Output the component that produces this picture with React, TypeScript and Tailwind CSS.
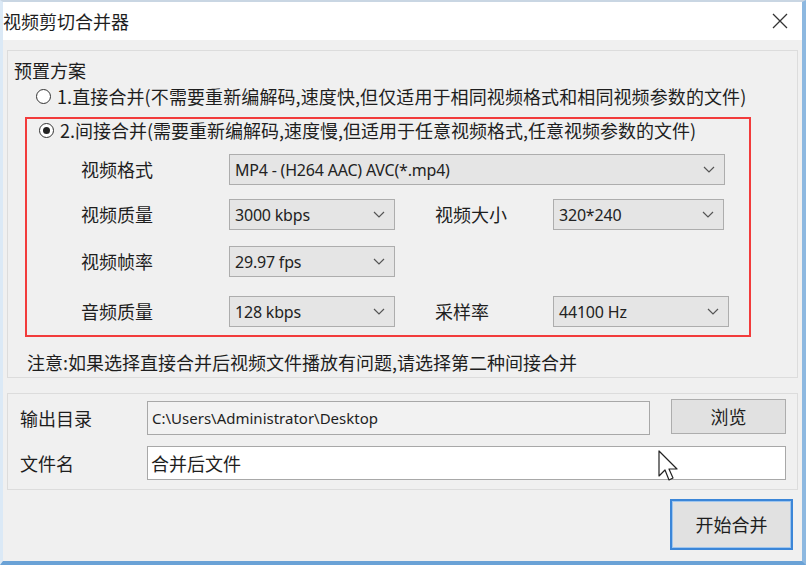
import React from 'react';

const CJK = '"Noto Sans CJK SC", "Noto Sans", sans-serif';

/**
 * Windows-style dropdown box
 */
const Select = ({ value, className }: { value: string; className: string }) => (
  <div
    className={`flex h-[31px] items-center justify-between border border-[#adadad] bg-[#e5e5e5] pl-[5px] pr-[9px] text-[16px] text-[#222] ${className}`}
    style={{ fontFamily: '"Noto Sans", "Noto Sans CJK SC", sans-serif' }}
  >
    <span className="tracking-[-0.2px]">{value}</span>
    <svg width="12" height="7" viewBox="0 0 12 7" fill="none">
      <path d="M1 1l5 5 5-5" stroke="#555" strokeWidth="1.2" />
    </svg>
  </div>
);

const Radio = ({ checked }: { checked?: boolean }) => (
  <span className="flex h-[15px] w-[15px] shrink-0 items-center justify-center rounded-full border border-[#333] bg-white">
    {checked && <span className="h-[7px] w-[7px] rounded-full bg-[#222]" />}
  </span>
);

export default function App() {
  return (
    <div
      className="relative flex h-[565px] w-[806px] flex-col overflow-hidden border-t-2 border-t-[#c9d6e3] border-b-[4px] border-b-[#6aa2d6] border-l-[3px] border-l-[#dbe9f6] border-r-[4px] border-r-[#8db8e0] bg-[#f0f0f0] text-[18px] text-[#1e1e1e]"
      style={{ fontFamily: CJK }}
    >
      {/* Title bar */}
      <div className="flex h-[38px] shrink-0 items-center justify-between bg-white pl-0 pr-[14px]">
        <span className="leading-none">视频剪切合并器</span>
        <svg width="16" height="16" viewBox="0 0 16 16" fill="none">
          <path d="M1 1l14 14M15 1L1 15" stroke="#333" strokeWidth="1.3" />
        </svg>
      </div>

      <div className="flex flex-1 flex-col px-[4px] pt-[10px]">
        {/* Group 1: presets */}
        <div className="flex h-[328px] flex-col border border-[#dcdcdc] pl-[6px] pr-[6px] pt-[8px]">
          <div className="leading-[22px]">预置方案</div>
          <div className="mt-[4px] flex items-center gap-[6px] pl-[22px] leading-[22px]">
            <Radio />
            <span className="tracking-[0.1px]">1.直接合并(不需要重新编解码,速度快,但仅适用于相同视频格式和相同视频参数的文件)</span>
          </div>

          <div className="mt-[10px] ml-[11px] mr-[40px] flex flex-col border-2 border-[#f23b3b] pb-[8px] pl-[12px]">
            <div className="flex items-center gap-[6px] leading-[22px]">
              <Radio checked />
              <span>2.间接合并(需要重新编解码,速度慢,但适用于任意视频格式,任意视频参数的文件)</span>
            </div>

            <div className="mt-[13px] flex items-center pl-[42px]">
              <span className="w-[148px]">视频格式</span>
              <Select value="MP4 - (H264 AAC) AVC(*.mp4)" className="w-[496px]" />
            </div>

            <div className="mt-[14px] flex items-center pl-[42px]">
              <span className="w-[148px]">视频质量</span>
              <Select value="3000 kbps" className="w-[166px]" />
              <span className="ml-[40px] w-[118px]">视频大小</span>
              <Select value="320*240" className="w-[171px]" />
            </div>

            <div className="mt-[16px] flex items-center pl-[42px]">
              <span className="w-[148px]">视频帧率</span>
              <Select value="29.97 fps" className="w-[166px]" />
            </div>

            <div className="mt-[19px] flex items-center pl-[42px]">
              <span className="w-[148px]">音频质量</span>
              <Select value="128 kbps" className="w-[166px]" />
              <span className="ml-[40px] w-[118px]">采样率</span>
              <Select value="44100 Hz" className="w-[176px]" />
            </div>
          </div>

          <div className="mt-[14px] pl-[13px] leading-[22px]">
            注意:如果选择直接合并后视频文件播放有问题,请选择第二种间接合并
          </div>
        </div>

        {/* Group 2: output */}
        <div className="mt-[15px] flex h-[97px] flex-col gap-[11px] border border-[#dcdcdc] pl-[12px] pr-[10px] pt-[7px]">
          <div className="flex items-center">
            <span className="w-[127px]">输出目录</span>
            <div
              className="flex h-[34px] w-[503px] items-center border border-[#a8a8a8] bg-[#f2f2f2] pl-[4px] text-[15px]"
              style={{ fontFamily: '"Noto Sans", sans-serif' }}
            >
              C:\Users\Administrator\Desktop
            </div>
            <button className="ml-[21px] -mt-[4px] h-[35px] w-[115px] border border-[#adadad] bg-[#e1e1e1] text-[18px]">
              浏览
            </button>
          </div>
          <div className="flex items-center">
            <span className="w-[127px]">文件名</span>
            <div className="flex h-[34px] w-[639px] items-center border border-[#a8a8a8] bg-white pl-[3px]">合并后文件</div>
          </div>
        </div>

        <div className="mt-[9px] flex justify-end pr-[5px]">
          <button className="h-[51px] w-[123px] border-2 border-[#3b86d8] bg-[#e1e1e1] text-[18px] shadow-[inset_0_0_0_1px_#9ec5ee]">
            开始合并
          </button>
        </div>
      </div>

      {/* Mouse pointer */}
      <svg className="absolute left-[655px] top-[448px]" width="20" height="32" viewBox="0 0 20 32">
        <path d="M1 1v25l6-6 4 10 4-2-4-9h8z" fill="white" stroke="#222" strokeWidth="1.2" strokeLinejoin="round" />
      </svg>
    </div>
  );
}
